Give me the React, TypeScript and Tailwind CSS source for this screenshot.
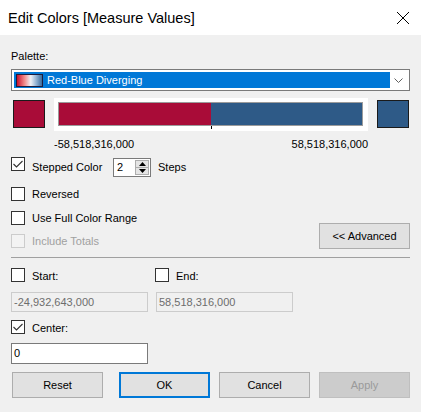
import React from 'react';

const font = { fontFamily: '"Liberation Sans", Arial, sans-serif' };

const CheckBox: React.FC<{ checked?: boolean; disabled?: boolean }> = ({ checked, disabled }) => (
  <span
    className={`flex h-[14px] w-[14px] shrink-0 items-center justify-center border ${
      disabled ? 'border-[#cccccc] bg-[#f3f3f3]' : 'border-[#333333] bg-white'
    }`}
  >
    {checked && (
      <svg width="12" height="12" viewBox="0 0 12 12">
        <path d="M1.5 6 L4.5 9 L10.5 3" fill="none" stroke="#333333" strokeWidth="1.1" />
      </svg>
    )}
  </span>
);

const Button: React.FC<{ label: string; variant?: 'default' | 'primary' | 'disabled'; className?: string }> = ({
  label,
  variant = 'default',
  className = '',
}) => {
  const styles =
    variant === 'primary'
      ? 'border-2 border-[#0078d7] bg-[#e1e1e1] text-black'
      : variant === 'disabled'
      ? 'border border-[#bfbfbf] bg-[#cccccc] text-[#9a9a9a]'
      : 'border border-[#adadad] bg-[#e1e1e1] text-black';
  return (
    <div className={`flex h-[26px] w-[91px] items-center justify-center text-[11px] leading-[14px] ${styles} ${className}`}>
      {label}
    </div>
  );
};

export default function App() {
  return (
    <div className="h-[412px] w-[421px] overflow-hidden bg-[#f0f0f0] text-black" style={font}>
      {/* Title bar */}
      <div className="flex h-[35px] items-start justify-between bg-white pl-[8px] pr-[11px] pt-[10px]">
        <span className="text-[14.5px] leading-[17px]">Edit Colors [Measure Values]</span>
        <svg width="14" height="14" viewBox="0 0 14 14" className="mt-[1px]">
          <path d="M1 1 L13 13 M13 1 L1 13" stroke="#000" strokeWidth="1" />
        </svg>
      </div>

      {/* Body */}
      <div className="px-[11px] pt-[14px] text-[11px] leading-[14px]">
        <div>Palette:</div>

        {/* Palette dropdown */}
        <div className="mt-[6px] flex h-[22px] items-stretch border border-[#7a7a7a] bg-white p-[2px]">
          <div className="flex flex-1 items-center bg-[#0078d7]">
            <span className="ml-[2px] h-[13px] w-[27px] border border-[#1c1c3c] bg-[linear-gradient(to_right,#c8102e,#f08a8a_30%,#eef1f6_55%,#86a9cc_80%,#3b6a99)]" />
            <span className="ml-[4px] text-white">Red-Blue Diverging</span>
          </div>
          <div className="flex w-[17px] items-center justify-center">
            <svg width="9" height="5" viewBox="0 0 9 5">
              <path d="M0.5 0.5 L4.5 4.5 L8.5 0.5" fill="none" stroke="#606060" strokeWidth="1" />
            </svg>
          </div>
        </div>

        {/* Color ramp */}
        <div className="mt-[7px] flex items-start">
          <span className="ml-[2px] mt-[2px] h-[28px] w-[32px] border border-[#1a1a1a] bg-[#a90c38]" />
          <div className="relative ml-[9px] h-[33px] w-[314px] bg-white pb-[5px] pl-[4px] pr-[5px] pt-[4px]">
            <div className="flex h-full border border-[#9b9b9b]">
              <div className="h-full w-1/2 bg-[#a90c38]" />
              <div className="h-full w-1/2 bg-[#2e5a87]" />
            </div>
            <span className="absolute left-[157px] top-[28px] h-[3px] w-px bg-black" />
          </div>
          <span className="ml-[9px] mt-[2px] h-[28px] w-[32px] border border-[#1a1a1a] bg-[#2e5a87]" />
        </div>

        <div className="ml-[43px] mt-[6px] flex w-[314px] justify-between">
          <span>-58,518,316,000</span>
          <span>58,518,316,000</span>
        </div>

        {/* Stepped color */}
        <div className="mt-[6px] flex items-start">
          <CheckBox checked />
          <span className="ml-[7px] mt-[3px] w-[81px]">Stepped Color</span>
          <div className="mt-[1px] flex h-[19px] w-[38px] items-stretch border border-[#7a7a7a] bg-white">
            <span className="flex-1 pl-[3px] leading-[17px]">2</span>
            <div className="my-[1px] mr-[1px] flex w-[14px] flex-col border border-[#adadad] bg-[#e5e5e5]">
              <div className="flex flex-1 items-center justify-center border-b border-[#adadad]">
                <svg width="7" height="4" viewBox="0 0 7 4">
                  <path d="M0 4 L3.5 0 L7 4 Z" fill="#000" />
                </svg>
              </div>
              <div className="flex flex-1 items-center justify-center">
                <svg width="7" height="4" viewBox="0 0 7 4">
                  <path d="M0 0 L3.5 4 L7 0 Z" fill="#000" />
                </svg>
              </div>
            </div>
          </div>
          <span className="ml-[7px] mt-[3px]">Steps</span>
        </div>

        {/* Options + advanced */}
        <div className="mt-[10px] flex items-start justify-between">
          <div className="flex flex-col">
            <div className="flex items-start">
              <CheckBox />
              <span className="ml-[7px]">Reversed</span>
            </div>
            <div className="mt-[10px] flex items-start">
              <CheckBox />
              <span className="ml-[7px]">Use Full Color Range</span>
            </div>
            <div className="mt-[9px] flex items-start">
              <CheckBox disabled />
              <span className="ml-[7px] text-[#a0a0a0]">Include Totals</span>
            </div>
          </div>
          <Button label="<< Advanced" className="mt-[36px]" />
        </div>

        <div className="mt-[8px] h-px bg-[#a0a0a0]" />

        {/* Start / End */}
        <div className="mt-[10px] flex items-start">
          <div className="flex w-[144px] items-start">
            <CheckBox />
            <span className="ml-[7px] mt-[1px]">Start:</span>
          </div>
          <div className="flex items-start">
            <CheckBox />
            <span className="ml-[7px] mt-[1px]">End:</span>
          </div>
        </div>

        <div className="mt-[9px] flex gap-[8px]">
          <div className="h-[20px] w-[137px] border border-[#cccccc] bg-[#f0f0f0] pl-[2px] leading-[18px] text-[#6d6d6d]">
            -24,932,643,000
          </div>
          <div className="h-[20px] w-[137px] border border-[#cccccc] bg-[#f0f0f0] pl-[2px] leading-[18px] text-[#6d6d6d]">
            58,518,316,000
          </div>
        </div>

        {/* Center */}
        <div className="mt-[8px] flex items-start">
          <CheckBox checked />
          <span className="ml-[7px] mt-[1px]">Center:</span>
        </div>

        <div className="mt-[8px] h-[21px] w-[137px] border border-[#7a7a7a] bg-white pl-[2px] leading-[19px]">0</div>

        {/* Footer buttons */}
        <div className="mt-[8px] flex justify-between">
          <Button label="Reset" className="ml-[1px]" />
          <div className="flex gap-[9px]">
            <Button label="OK" variant="primary" />
            <Button label="Cancel" />
            <Button label="Apply" variant="disabled" />
          </div>
        </div>
      </div>
    </div>
  );
}
